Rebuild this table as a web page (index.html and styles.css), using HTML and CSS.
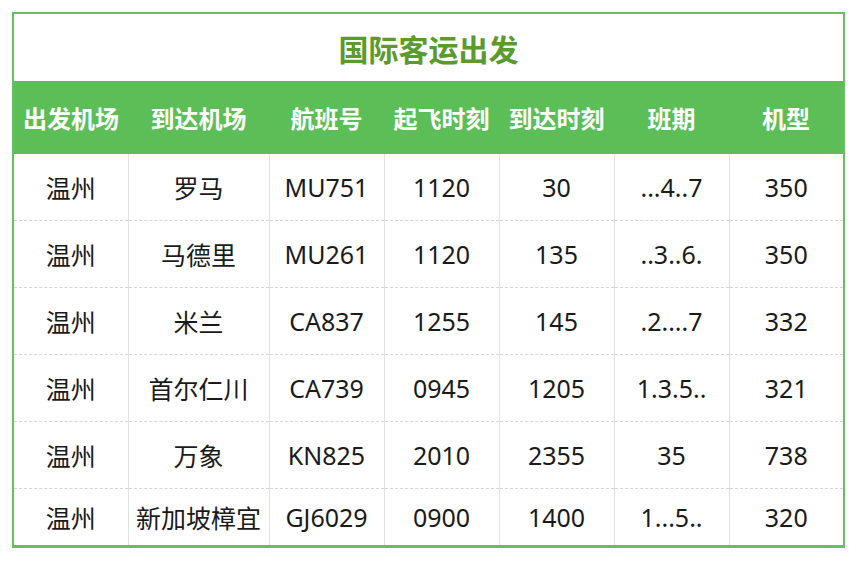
FILE: index.html
```html
<!DOCTYPE html>
<html lang="zh-CN">
<head>
<meta charset="utf-8">
<title>国际客运出发</title>
<link rel="stylesheet" href="styles.css">
</head>
<body>
<div class="board">
  <div class="title">国际客运出发</div>
  <table class="flights">
    <colgroup>
      <col class="c-narrow"><col class="c-wide"><col class="c-mid"><col class="c-mid"><col class="c-mid"><col class="c-mid"><col class="c-narrow">
    </colgroup>
    <thead>
      <tr><th>出发机场</th><th>到达机场</th><th>航班号</th><th>起飞时刻</th><th>到达时刻</th><th>班期</th><th>机型</th></tr>
    </thead>
    <tbody>
      <tr><td>温州</td><td>罗马</td><td>MU751</td><td>1120</td><td>30</td><td>...4..7</td><td>350</td></tr>
      <tr><td>温州</td><td>马德里</td><td>MU261</td><td>1120</td><td>135</td><td>..3..6.</td><td>350</td></tr>
      <tr><td>温州</td><td>米兰</td><td>CA837</td><td>1255</td><td>145</td><td>.2....7</td><td>332</td></tr>
      <tr><td>温州</td><td>首尔仁川</td><td>CA739</td><td>0945</td><td>1205</td><td>1.3.5..</td><td>321</td></tr>
      <tr><td>温州</td><td>万象</td><td>KN825</td><td>2010</td><td>2355</td><td>35</td><td>738</td></tr>
      <tr class="last"><td>温州</td><td>新加坡樟宜</td><td>GJ6029</td><td>0900</td><td>1400</td><td>1...5..</td><td>320</td></tr>
    </tbody>
  </table>
</div>
</body>
</html>
```
FILE: styles.css
```css
html, body {
  margin: 0;
  background: #ffffff;
}
body {
  padding: 12px;
  font-family: "Noto Sans", "Noto Sans CJK SC", sans-serif;
}
.board {
  width: 829px;
  border: 2px solid #66bf63;
  border-bottom-width: 3px;
  background: #ffffff;
}
.title {
  height: 67px;
  display: flex;
  align-items: center;
  justify-content: center;
  font-family: "Noto Sans CJK SC", sans-serif;
  font-size: 30px;
  font-weight: 700;
  color: #5b9a2c;
}
.flights {
  width: 100%;
  border-collapse: collapse;
  table-layout: fixed;
}
.c-narrow { width: 114px; }
.c-wide { width: 141px; }
.c-mid { width: 115px; }
.flights th {
  height: 73px;
  padding: 0;
  background: #5cbe56;
  color: #ffffff;
  font-family: "Noto Sans CJK SC", sans-serif;
  font-size: 24px;
  font-weight: 700;
  text-align: center;
}
.flights td {
  height: 66px;
  padding: 0;
  text-align: center;
  font-size: 25px;
  color: #1a1a1a;
  border-top: 1px dashed #d6d6d6;
  border-left: 1px solid #e2e2e2;
  white-space: nowrap;
}
.flights tbody tr:first-child td {
  border-top: none;
}
.flights td:first-child {
  border-left: none;
}
.flights tr.last td {
  height: 56px;
}
```
